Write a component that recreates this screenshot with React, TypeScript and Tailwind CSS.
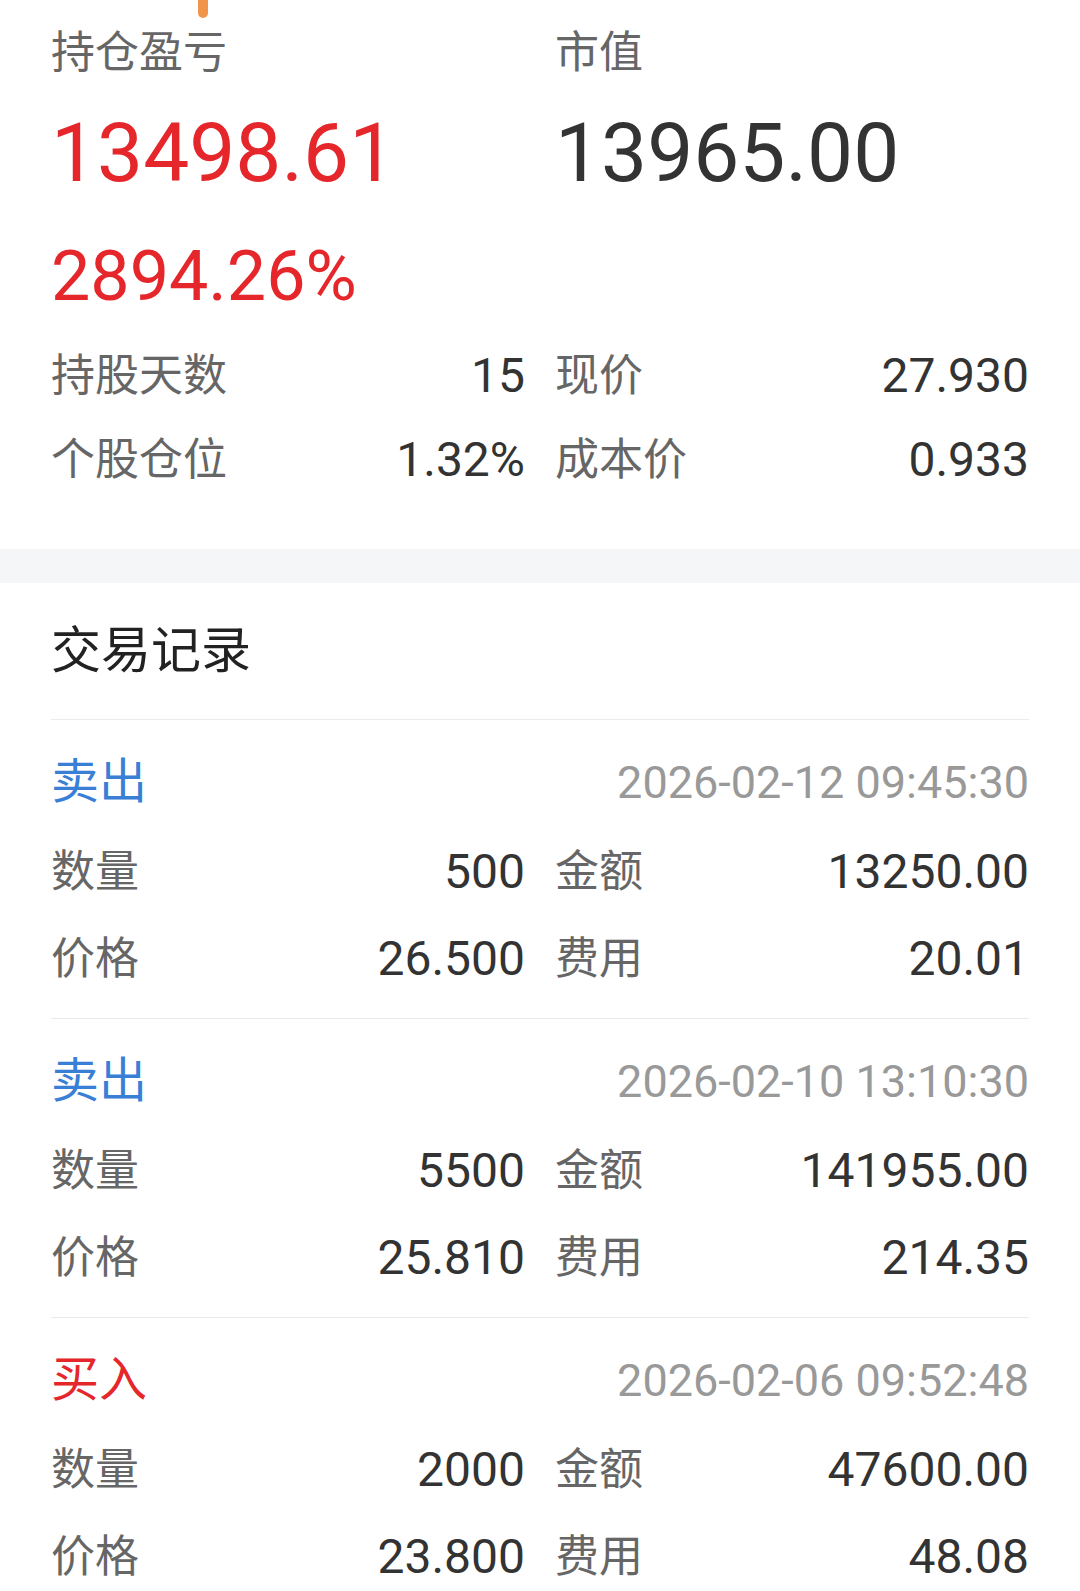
import React from "react";

const records = [
  { type: "卖出", time: "2026-02-12 09:45:30", qty: "500", amount: "13250.00", price: "26.500", fee: "20.01" },
  { type: "卖出", time: "2026-02-10 13:10:30", qty: "5500", amount: "141955.00", price: "25.810", fee: "214.35" },
  { type: "买入", time: "2026-02-06 09:52:48", qty: "2000", amount: "47600.00", price: "23.800", fee: "48.08" },
];

const Cell: React.FC<{ label: string; value: string }> = ({ label, value }) => (
  <div className="flex items-center justify-between">
    <span className="text-[44px] leading-none text-[#666666]">{label}</span>
    <span className="text-[48px] leading-none text-[#333333]">{value}</span>
  </div>
);

const PairRow: React.FC<{ h: string; left: [string, string]; right: [string, string] }> = ({ h, left, right }) => (
  <div className={`grid grid-cols-2 gap-x-[30px] ${h}`}>
    <Cell label={left[0]} value={left[1]} />
    <Cell label={right[0]} value={right[1]} />
  </div>
);

export default function App() {
  return (
    <div className="relative min-h-screen bg-white font-['Roboto','Noto_Sans_CJK_SC',sans-serif]">
      {/* tab indicator peeking from above */}
      <div className="absolute left-[198px] top-0 h-[18px] w-[10px] rounded-b-full bg-[#f0954a]"></div>

      {/* position summary */}
      <section className="px-[51px] pb-[47px]">
        <div className="grid grid-cols-2 gap-x-[30px]">
          <div>
            <div className="flex h-[106px] items-center text-[44px] leading-none text-[#666666]">持仓盈亏</div>
            <div className="flex h-[94px] items-center text-[82px] leading-none text-[#e5262b]">13498.61</div>
          </div>
          <div>
            <div className="flex h-[106px] items-center text-[44px] leading-none text-[#666666]">市值</div>
            <div className="flex h-[94px] items-center text-[82px] leading-none text-[#333333]">13965.00</div>
          </div>
        </div>
        <div className="flex h-[134px] items-center pt-[18px] text-[70px] leading-none text-[#e5262b]">2894.26%</div>
        <PairRow h="h-[84px]" left={["持股天数", "15"]} right={["现价", "27.930"]} />
        <PairRow h="h-[84px]" left={["个股仓位", "1.32%"]} right={["成本价", "0.933"]} />
      </section>

      <div className="h-[34px] bg-[#f5f6f8]"></div>

      {/* trade records */}
      <section className="px-[51px]">
        <div className="flex h-[136px] items-center text-[50px] leading-none text-[#222222]">交易记录</div>
        {records.map((r, i) => (
          <div key={i} className="border-t border-[#ebebeb] pt-[32px] pb-[16px]">
            <div className="flex h-[60px] items-center justify-between">
              <span className={`text-[48px] leading-none ${r.type === "买入" ? "text-[#e5262b]" : "text-[#3a7fd6]"}`}>{r.type}</span>
              <span className="text-[45px] leading-none text-[#999999]">{r.time}</span>
            </div>
            <div className="mt-[16px]">
              <PairRow h="h-[87px]" left={["数量", r.qty]} right={["金额", r.amount]} />
              <PairRow h="h-[87px]" left={["价格", r.price]} right={["费用", r.fee]} />
            </div>
          </div>
        ))}
      </section>
    </div>
  );
}
